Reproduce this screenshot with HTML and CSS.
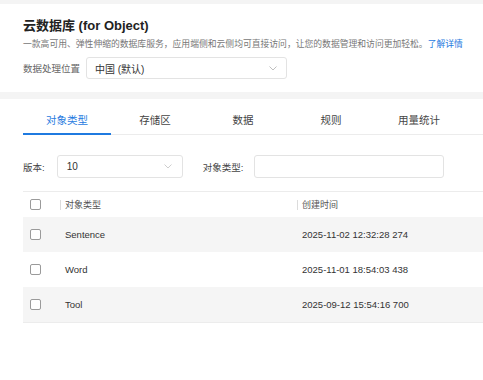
FILE: index.html
```html
<!DOCTYPE html>
<html>
<head>
    <meta name="viewport" content="width=device-width, initial-scale=1">
    <link rel="stylesheet" href="styles.css">
</head>
<body>
    <div class="page">
        <section class="card intro">
            <h1 class="title">云数据库 (for Object)</h1>
            <p class="desc">一款高可用、弹性伸缩的数据库服务，应用端侧和云侧均可直接访问，让您的数据管理和访问更加轻松。<a href="#" class="link">了解详情</a></p>
            <div class="field">
                <span class="field-label">数据处理位置</span>
                <div class="select region">
                    <span>中国 (默认)</span>
                    <svg class="chevron" width="8" height="5" viewBox="0 0 8 5"><path d="M0.5 0.5l3.5 3.5 3.5-3.5" fill="none" stroke="#b8b8b8" stroke-width="0.9"/></svg>
                </div>
            </div>
        </section>

        <section class="card main">
            <nav class="tabs">
                <a class="tab active">对象类型</a>
                <a class="tab">存储区</a>
                <a class="tab">数据</a>
                <a class="tab">规则</a>
                <a class="tab">用量统计</a>
            </nav>

            <div class="filters">
                <span class="filter-label">版本:</span>
                <div class="select version">
                    <span>10</span>
                    <svg class="chevron" width="8" height="5" viewBox="0 0 8 5"><path d="M0.5 0.5l3.5 3.5 3.5-3.5" fill="none" stroke="#c8c8c8" stroke-width="0.9"/></svg>
                </div>
                <span class="filter-label type-label">对象类型:</span>
                <div class="input"></div>
            </div>

            <div class="table">
                <div class="row head">
                    <span class="cell"><i class="check"></i></span>
                    <span class="cell sep">对象类型</span>
                    <span class="cell sep">创建时间</span>
                </div>
                <div class="row alt">
                    <span class="cell"><i class="check"></i></span>
                    <span class="cell">Sentence</span>
                    <span class="cell">2025-11-02 12:32:28 274</span>
                </div>
                <div class="row">
                    <span class="cell"><i class="check"></i></span>
                    <span class="cell">Word</span>
                    <span class="cell">2025-11-01 18:54:03 438</span>
                </div>
                <div class="row alt">
                    <span class="cell"><i class="check"></i></span>
                    <span class="cell">Tool</span>
                    <span class="cell">2025-09-12 15:54:16 700</span>
                </div>
            </div>
        </section>
    </div>
</body>
</html>
```

FILE: styles.css
```css
/* page */
body {
    margin: 0;
    font-family: "Liberation Sans", "Noto Sans CJK SC", sans-serif;
    background-color: #f4f4f4;
    color: #333;
}

.page {
    padding-top: 4px;
}

.card {
    background-color: #fff;
}

/* intro card */
.intro {
    padding: 12px 23px 13px;
    margin-bottom: 7px;
}

.title {
    margin: 0;
    font-size: 13px;
    line-height: 20px;
    font-weight: 700;
    color: #222;
}

.desc {
    margin: 1px 0 0;
    font-size: 8.8px;
    line-height: 14px;
    color: #777;
    white-space: nowrap;
}

.link {
    color: #1f7ae0;
    text-decoration: none;
}

.field {
    display: flex;
    align-items: center;
    margin-top: 6px;
}

.field-label {
    width: 63px;
    font-size: 9.5px;
    color: #666;
}

.select {
    display: flex;
    align-items: center;
    justify-content: space-between;
    box-sizing: border-box;
    border: 1px solid #e3e3e3;
    border-radius: 3px;
    font-size: 10px;
    color: #333;
}

.region {
    width: 201px;
    height: 22px;
    padding: 0 9px 0 8px;
}

/* main card */
.main {
    padding-left: 23px;
    min-height: 282px;
}

.tabs {
    display: flex;
    border-bottom: 1px solid #ececec;
}

.tab {
    width: 88px;
    padding: 12px 0 4px;
    line-height: 18px;
    text-align: center;
    font-size: 10.5px;
    color: #444;
    border-bottom: 2px solid transparent;
    margin-bottom: -1px;
}

.tab.active {
    color: #1f7ae0;
    border-bottom-color: #1f7ae0;
}

.filters {
    display: flex;
    align-items: center;
    height: 23px;
    padding: 20px 0 13px;
}

.filter-label {
    font-size: 9.5px;
    color: #444;
}

.version {
    width: 126px;
    height: 23px;
    margin-left: 12px;
    padding: 0 10px 0 9px;
}

.type-label {
    margin-left: 20px;
}

.input {
    width: 190px;
    height: 23px;
    box-sizing: border-box;
    margin-left: 11px;
    border: 1px solid #e3e3e3;
    border-radius: 3px;
}

/* table */
.table {
    border-top: 1px solid #ececec;
}

.row {
    display: grid;
    grid-template-columns: 37px 237px 1fr;
    align-items: center;
    height: 35px;
    font-size: 9.5px;
    color: #333;
}

.row.head {
    height: 25px;
    font-size: 9px;
    color: #555;
}

.row.alt {
    background-color: #f5f5f5;
}

.row:last-child {
    border-bottom: 1px solid #ececec;
}

.cell {
    padding-left: 5px;
}

.cell:first-child {
    padding-left: 7px;
    display: flex;
}

.sep {
    border-left: 1px solid #dcdcdc;
    line-height: 10px;
    padding-left: 4px;
}

.check {
    width: 11px;
    height: 11px;
    box-sizing: border-box;
    border: 1px solid #9a9a9a;
    border-radius: 2px;
    background-color: #fff;
}
```
